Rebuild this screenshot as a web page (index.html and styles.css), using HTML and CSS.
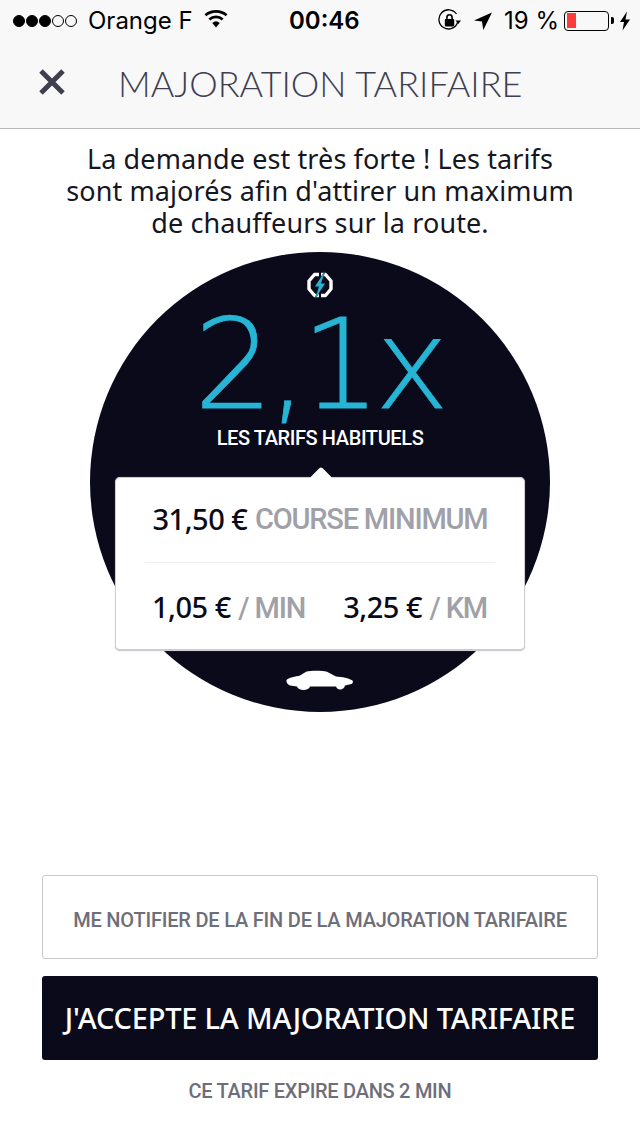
FILE: index.html
```html
<!DOCTYPE html>
<html lang="fr">
<head>
<meta charset="utf-8">
<title>Majoration tarifaire</title>
<link rel="stylesheet" href="styles.css">
</head>
<body>
<div class="screen">
  <header class="top">
    <div class="status">
      <div class="status-left">
        <span class="signal"><i class="dot on"></i><i class="dot on"></i><i class="dot on"></i><i class="dot"></i><i class="dot"></i></span>
        <span class="carrier">Orange F</span>
        <svg class="wifi" width="24" height="18" viewBox="0 0 26 20"><path d="M13 19.500l-4.200-5.100a6.300 6.300 0 0 1 8.400 0z" fill="#000"/><path d="M5.600 10.600a11 11 0 0 1 14.800 0" fill="none" stroke="#000" stroke-width="3"/><path d="M1.200 5.800a18.500 18.500 0 0 1 23.600 0" fill="none" stroke="#000" stroke-width="3"/></svg>
      </div>
      <div class="clock">00:46</div>
      <div class="status-right">
        <svg class="lock" width="24" height="24" viewBox="0 0 24 24"><path d="M19.600 13.500A9.600 9.600 0 1 1 18.500 5" fill="none" stroke="#000" stroke-width="1.300"/><path d="M17.500 11.500h5.500l-2.700 3.400z" fill="#000"/><rect x="6.800" y="10" width="9.400" height="7.400" rx="1" fill="#000"/><path d="M8.900 10V8.400a2.600 2.600 0 0 1 5.200 0V10" fill="none" stroke="#000" stroke-width="1.600"/></svg>
        <svg class="arrow" width="20" height="20" viewBox="0 0 20 20"><path d="M19 1.500L1 9.500l8 .9 1.300 8.600z" fill="#000"/></svg>
        <span class="pct">19 %</span>
        <span class="battery"><span class="level"></span></span>
        <span class="nub"></span>
        <svg class="bolt" width="12" height="20" viewBox="0 0 12 20"><path d="M8 .5L1 11h4l-1.500 8.500L11 8.500H6.500z" fill="#000"/></svg>
      </div>
    </div>
    <div class="nav">
      <svg class="close" width="28" height="28" viewBox="0 0 28 28"><path d="M3 3l22 22M25 3L3 25" stroke="#3f3f50" stroke-width="5" fill="none"/></svg>
      <h1 class="title">MAJORATION TARIFAIRE</h1>
    </div>
  </header>

  <main class="content">
    <p class="lead">La demande est très forte ! Les tarifs<br>sont majorés afin d'attirer un maximum<br>de chauffeurs sur la route.</p>
    <section class="circle">
      <svg class="surge" width="28" height="30" viewBox="0 0 28 30"><path d="M13 4.500H8.500L3 11V19L8.500 25.500H13M15 4.500H19.500L25 11V19L19.500 25.500H15" fill="none" stroke="#fff" stroke-width="3.400" stroke-linejoin="round"/><path d="M19 1L9 16.500h4L9 29 19 13.500h-4z" fill="#27b5d6" stroke="#0a0a1a" stroke-width="0.800" paint-order="stroke"/></svg>
      <div class="mult">2,1x</div>
      <div class="mult-label">LES TARIFS HABITUELS</div>
      <div class="card">
        <div class="row first"><b>31,50 €</b>&nbsp;<span>COURSE MINIMUM</span></div>
        <div class="row split">
          <div><b>1,05 €</b> <span>/ MIN</span></div>
          <div><b>3,25 €</b> <span>/ KM</span></div>
        </div>
      </div>
      <svg class="car" width="68" height="21" viewBox="0 0 68 21"><path d="M.5 10C2 7.500 10 6.500 14 5.500L20 1.800C25 .5 36 .5 41 1.800L50 6.500C56 7 63 8 66.500 10.500c1 1.500 0 3-1 3.500L59 15.500C58 20.500 51 20.500 50 16.500H24C23 21 12 21 11 16.500L4 15.500C1.500 14.500 0 12 .5 10z" fill="#fff"/></svg>
    </section>
  </main>

  <footer class="actions">
    <button class="btn ghost">ME NOTIFIER DE LA FIN DE LA MAJORATION TARIFAIRE</button>
    <button class="btn solid">J'ACCEPTE LA MAJORATION TARIFAIRE</button>
    <div class="expire">CE TARIF EXPIRE DANS 2 MIN</div>
  </footer>
</div>
</body>
</html>
```
FILE: styles.css
```css
* { box-sizing: border-box; }
html, body { margin: 0; padding: 0; background: #fff; }
.screen {
  width: 640px;
  height: 1136px;
  display: flex;
  flex-direction: column;
  overflow: hidden;
  font-family: "Noto Sans", sans-serif;
}
.top {
  height: 129px;
  flex: none;
  background: #f8f8f9;
  border-bottom: 1px solid #b8b8b8;
}
.status {
  height: 41px;
  display: flex;
  align-items: center;
  justify-content: space-between;
  padding: 0 9px 0 13px;
  font-family: Inter, sans-serif;
  color: #000;
  position: relative;
}
.status-left, .status-right { display: flex; align-items: center; }
.signal { display: flex; gap: 1px; }
.dot {
  width: 12px;
  height: 12px;
  border-radius: 50%;
  border: 1px solid #000;
}
.dot.on { background: #000; }
.carrier { font-size: 24px; margin-left: 11px; letter-spacing: 0; }
.wifi { margin-left: 11px; margin-bottom: 3px; }
.clock {
  position: absolute;
  left: 289px;
  font-size: 24px;
  font-weight: 600;
}
.lock { margin-right: 11px; }
.arrow { margin-right: 11px; }
.pct { font-size: 24px; margin-right: 5px; }
.battery {
  width: 45px;
  height: 20px;
  border: 1.500px solid #000;
  border-radius: 4px;
  padding: 1.500px;
  display: flex;
}
.level { width: 9px; background: #fc3d39; }
.nub { width: 3px; height: 7px; background: #000; margin-left: 2px; border-radius: 0 2px 2px 0; }
.bolt { margin-left: 5px; }
.nav {
  height: 87px;
  display: flex;
  align-items: center;
  padding: 0 0 4px 38px;
}
.close { flex: none; margin-bottom: 2px; }
.title {
  margin: 0 0 0 52px;
  font-family: Lato, sans-serif;
  font-weight: 300;
  font-size: 36px;
  letter-spacing: 0;
  color: #3f3f50;
  white-space: nowrap;
}
.content {
  display: flex;
  flex-direction: column;
  align-items: center;
}
.lead {
  margin: 14px 0 0;
  font-family: "Noto Sans", sans-serif;
  font-size: 27px;
  line-height: 32px;
  letter-spacing: 0.1px;
  text-align: center;
  color: #16161f;
  white-space: nowrap;
}
.circle {
  margin-top: 13px;
  width: 460px;
  height: 460px;
  border-radius: 50%;
  background: #0a0a1a;
  display: flex;
  flex-direction: column;
  align-items: center;
  padding-top: 18px;
}
.surge { display: block; flex: none; }
.mult {
  font-family: "DejaVu Sans", sans-serif;
  font-weight: 200;
  font-size: 125px;
  line-height: 112px;
  letter-spacing: -6px;
  -webkit-text-stroke: 0.8px #27b5d6;
  color: #27b5d6;
  margin-top: 9px;
  margin-right: 3px;
  white-space: nowrap;
}
.mult-label {
  font-family: Roboto, sans-serif;
  font-size: 20px;
  font-weight: 500;
  letter-spacing: -0.4px;
  color: #fff;
  line-height: 26px;
  margin-top: 4px;
}
.card {
  position: relative;
  margin-top: 26px;
  width: 410px;
  height: 174px;
  flex: none;
  background: #fff;
  border: 1px solid #ccccd2;
  border-bottom-width: 2px;
  border-radius: 5px;
  padding: 0 29px;
  box-shadow: 0 0 1px rgba(160, 160, 170, 0.8);
}
.card::before {
  content: "";
  position: absolute;
  left: 197px;
  top: -8px;
  width: 16px;
  height: 16px;
  background: #fff;
  transform: rotate(45deg);
  border-radius: 2px;
}
.row {
  position: relative;
  height: 85px;
  display: flex;
  align-items: center;
  justify-content: center;
  font-size: 29px;
  font-weight: 500;
  white-space: nowrap;
  border-bottom: 1px solid #f0f0f2;
  color: #a0a0a8;
}
.row span { font-family: Roboto, sans-serif; font-weight: 500; letter-spacing: -1.2px; }
.row.first { padding-bottom: 3px; }
.row b { font-weight: 500; color: #0a0a1a; letter-spacing: -0.5px; }
.row.split {
  border-bottom: 0;
  justify-content: space-between;
  padding: 2px 8px 0 7px;
}
.car { margin-top: 19px; display: block; flex: none; }
.actions {
  margin-top: auto;
  padding: 0 42px 32px;
  display: flex;
  flex-direction: column;
  align-items: stretch;
}
.btn {
  display: block;
  width: 100%;
  border-radius: 3px;
  white-space: nowrap;
  padding: 0;
}
.ghost {
  height: 84px;
  padding-top: 5px;
  background: #fff;
  border: 1px solid #c8c8cc;
  color: #6e6e7a;
  font-family: Roboto, sans-serif;
  font-size: 20px;
  font-weight: 500;
  letter-spacing: -0.2px;
}
.solid {
  height: 84px;
  margin-top: 17px;
  padding-bottom: 2px;
  background: #0a0a1a;
  border: 0;
  color: #fff;
  font-family: "Noto Sans", sans-serif;
  font-size: 29px;
  font-weight: 500;
  letter-spacing: -0.2px;
}
.expire {
  margin-top: 18px;
  text-align: center;
  font-family: Roboto, sans-serif;
  font-size: 20px;
  font-weight: 500;
  line-height: 26px;
  letter-spacing: -0.27px;
  color: #6e6e7a;
}
```
